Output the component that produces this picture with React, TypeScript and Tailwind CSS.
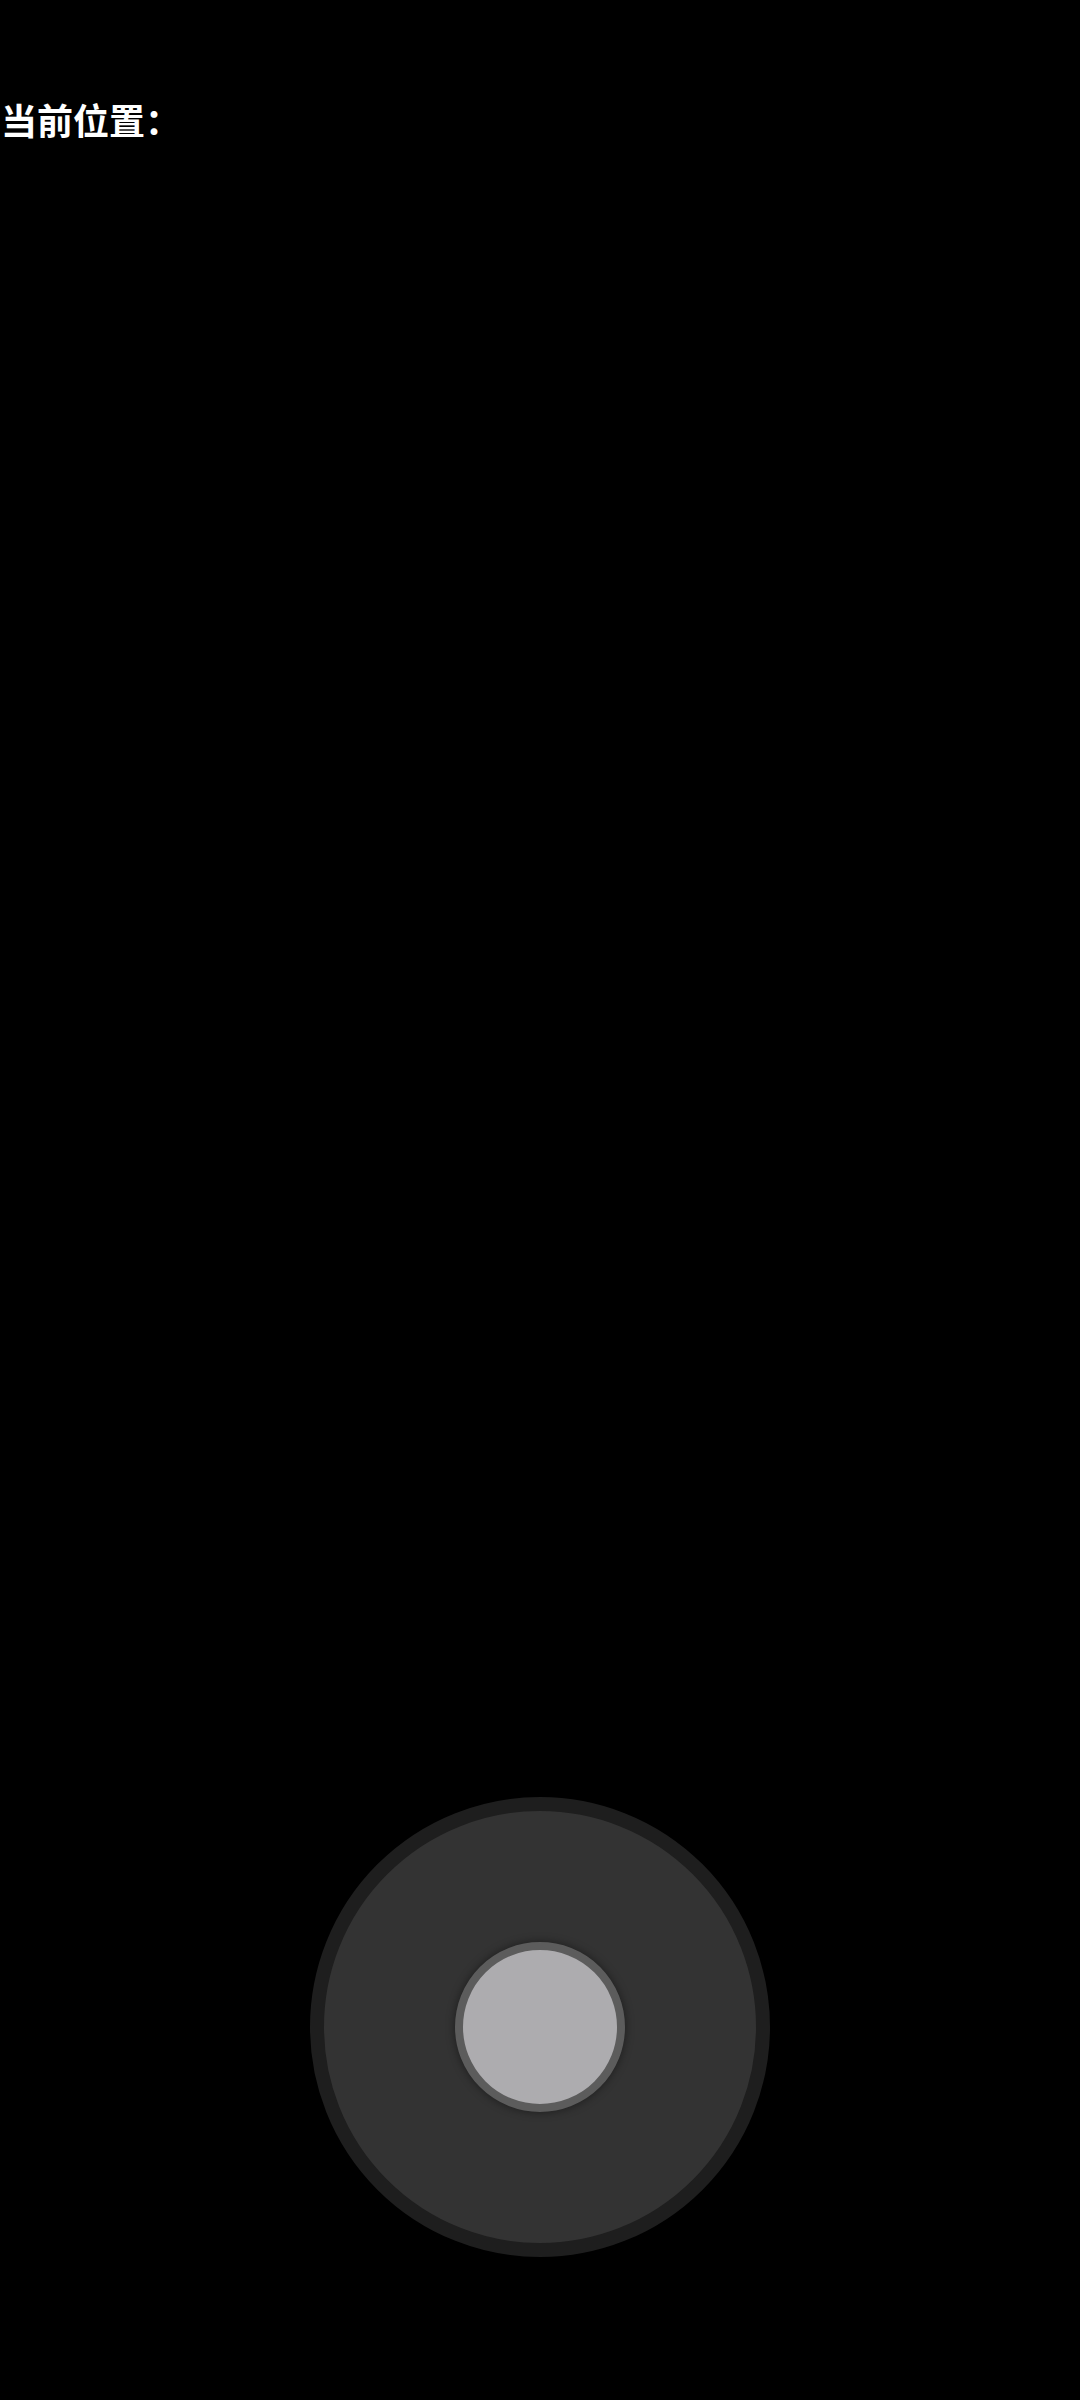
export default function App() {
  return (
    <div className="flex h-[2400px] w-[1080px] flex-col bg-black">
      <p
        className="pt-[101px] pl-[1px] text-[36px] font-bold leading-[36px] text-white"
        style={{ fontFamily: '"Noto Sans CJK SC", sans-serif' }}
      >
        当前位置：
      </p>

      <div className="mt-auto mb-[143px] flex justify-center">
        <div className="flex h-[460px] w-[460px] items-center justify-center rounded-full border-[14px] border-[#1e1e1e] bg-[#333333]">
          <div className="flex h-[170px] w-[170px] items-center justify-center rounded-full border-[8px] border-[#5c5c5c] bg-[#adacaf] shadow-[0_0_10px_rgba(0,0,0,0.45)]" />
        </div>
      </div>
    </div>
  );
}
